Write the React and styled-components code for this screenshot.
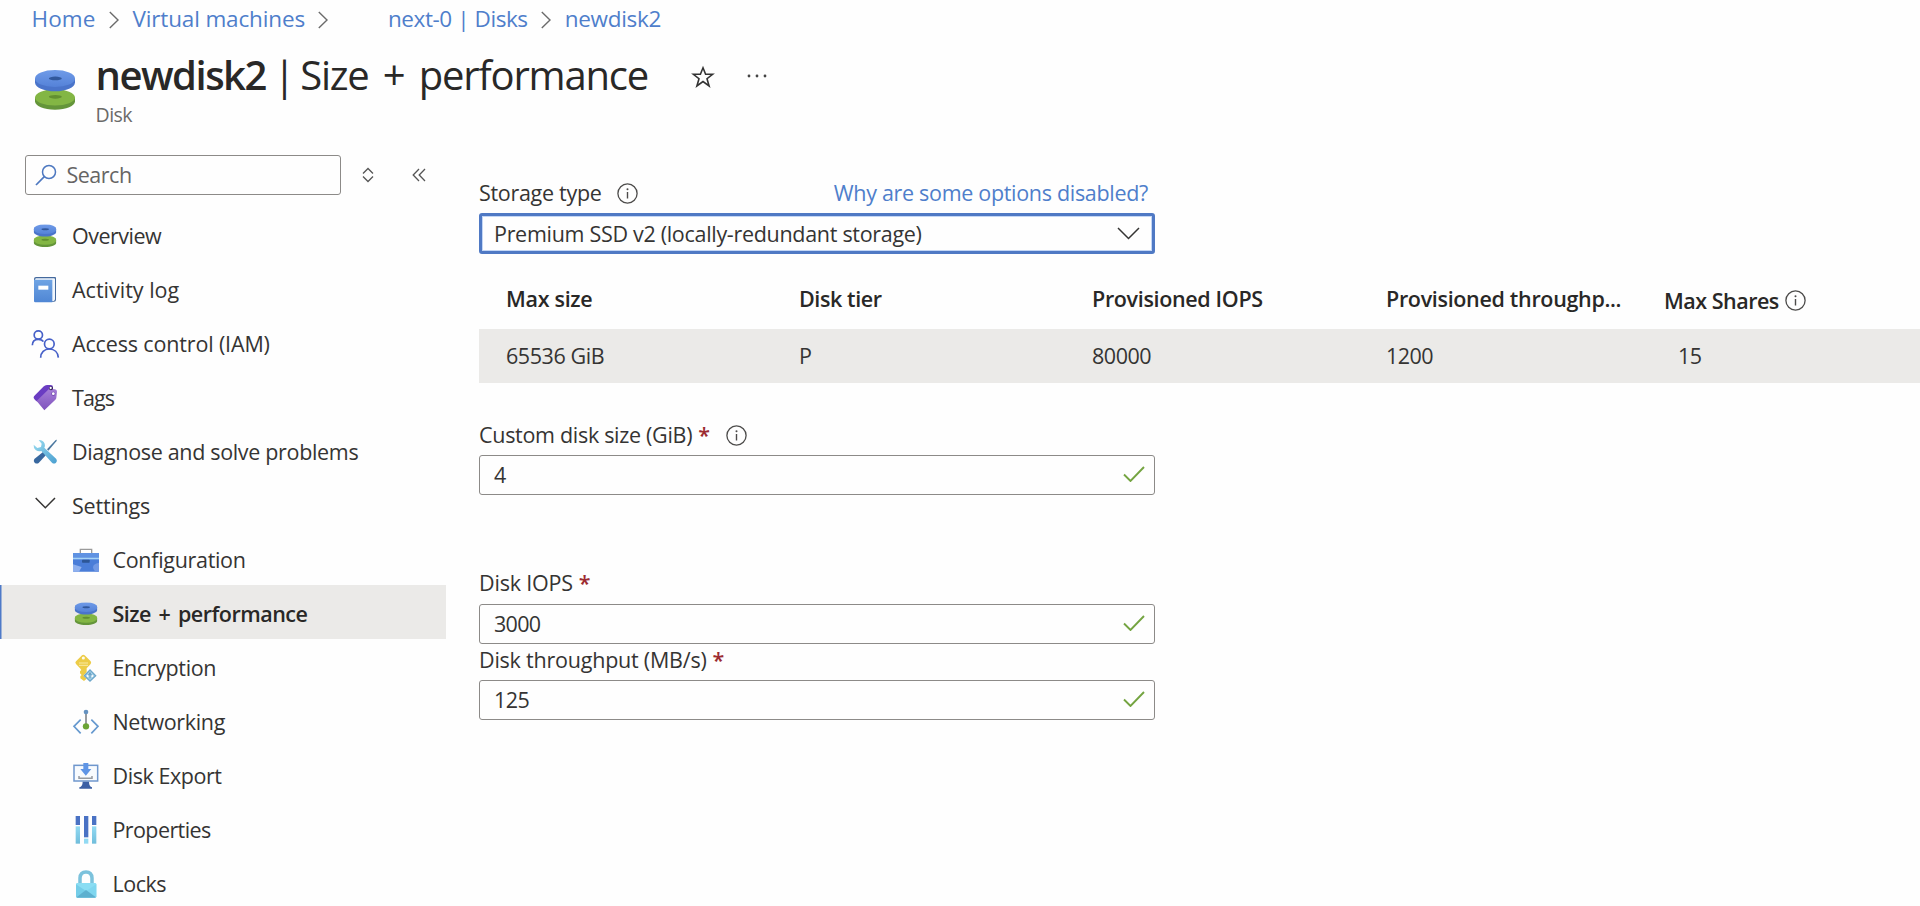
import React from "react";
import styled, { createGlobalStyle, css } from "styled-components";

const GlobalStyle = createGlobalStyle`
  *, *::before, *::after { box-sizing: border-box; }
  html, body { margin: 0; background: #fefefe; overflow: hidden; }
  body {
    font-family: "Open Sans", "Noto Sans", sans-serif;
    font-size: 21.5px;
    color: #353433;
  }
`;

const Page = styled.div`
  height: 906px;
  display: flex;
  flex-direction: column;
  overflow: hidden;
`;

const Text = styled.span`
  white-space: nowrap;
  letter-spacing: ${(p) => p.$track ?? -0.3}px;
  word-spacing: ${(p) => p.$words || 0}px;
  font-weight: ${(p) => (p.$bold ? 600 : 400)};
`;

/* breadcrumb */
const Breadcrumb = styled.nav`
  flex: none;
  display: flex;
  align-items: center;
  height: 37px;
  padding-left: 31.5px;
`;
const Crumb = styled.a`
  font-size: 22.5px;
  line-height: 37px;
  white-space: nowrap;
  color: #4f7ecb;
  letter-spacing: ${(p) => p.$track}px;
  margin-left: ${(p) => p.$before || 0}px;
`;
const CrumbArrow = styled.svg`
  width: 10px;
  height: 18px;
  margin: 2px 14px 0 13px;
`;

/* title */
const Header = styled.header`
  flex: none;
  display: flex;
  height: 118px;
  padding: 12px 0 0 35px;
`;
const HeaderIcon = styled.div`
  width: 40px;
  height: 40px;
  margin: 21px 20.5px 0 0;
`;
const TitleRow = styled.div`
  display: flex;
  align-items: center;
  height: 51px;
`;
const Title = styled.h1`
  display: flex;
  margin: 0;
  font-size: 40px;
  line-height: 50px;
  font-weight: 400;
  white-space: nowrap;
  letter-spacing: -1.2px;
  word-spacing: 5px;
  color: #292827;
`;
const ResourceName = styled.span`
  font-weight: 600;
  letter-spacing: -1.5px;
`;
const Divider = styled.span`
  margin: 0 6px 0 7.5px;
`;
const Kind = styled.div`
  margin-top: 2px;
  font-size: 19.5px;
  line-height: 26px;
  letter-spacing: -0.5px;
  color: #6b6a69;
`;
const StarIcon = styled.svg`
  width: 24px;
  height: 24px;
  margin: 4px 0 0 43px;
`;
const DotsIcon = styled.svg`
  width: 20px;
  height: 6px;
  margin: 2px 0 0 32px;
`;

/* body */
const Body = styled.div`
  flex: 1;
  min-height: 0;
  display: flex;
`;
const Sidebar = styled.aside`
  flex: none;
  width: 446px;
`;
const SearchRow = styled.div`
  display: flex;
  align-items: center;
  height: 40px;
  padding-left: 25px;
`;
const SearchBox = styled.div`
  display: flex;
  align-items: center;
  gap: 10px;
  width: 316px;
  height: 40px;
  padding: 0 0 1px 8.5px;
  border: 1.5px solid #8c8a88;
  border-radius: 3px;
  color: #666564;
`;
const SearchGlyph = styled.svg`
  width: 22px;
  height: 22px;
`;
const SortGlyph = styled.svg`
  width: 12px;
  height: 16px;
  margin-left: 21px;
`;
const CollapseGlyph = styled.svg`
  width: 14px;
  height: 14px;
  margin-left: 38px;
`;
const Menu = styled.ul`
  list-style: none;
  margin: 12px 0 0;
  padding: 0;
`;
const MenuItem = styled.li`
  display: flex;
  align-items: center;
  gap: 14px;
  height: 54px;
  padding: 3px 0 0 ${(p) => (p.$nested ? 72.5 : 32)}px;
  ${(p) =>
    p.$selected &&
    css`
      background: #ebeae8;
      box-shadow: inset 1.5px 0 0 #4f7ac8;
      color: #292827;
    `}
`;
const MenuIcon = styled.svg`
  flex: none;
  width: 26px;
  height: 26px;
  overflow: visible;
`;
const DiskIcon = styled.svg`
  display: block;
  width: 100%;
  height: 100%;
`;

/* content */
const Content = styled.main`
  flex: 1;
  min-width: 0;
  padding: 23px 0 0 33px;
`;
const Field = styled.section`
  width: 676px;
  margin-top: ${(p) => p.$top || 0}px;
`;
const Label = styled.label`
  display: flex;
  align-items: center;
  height: 30px;
  margin-bottom: ${(p) => p.$gap || 5}px;
  padding-right: 7px;
  line-height: 30px;
`;
const Required = styled.span`
  margin-left: 6px;
  font-weight: 600;
  color: #9c2b30;
`;
const InfoGlyph = styled.svg`
  flex: none;
  width: 21px;
  height: 21px;
  margin-left: ${(p) => p.$before}px;
`;
const HelpLink = styled.a`
  margin-left: auto;
  color: #4f7ecb;
  white-space: nowrap;
  letter-spacing: -0.31px;
`;
const Select = styled.div`
  display: flex;
  align-items: center;
  justify-content: space-between;
  height: 41px;
  padding: 0 12px 0 12px;
  border: 3px solid #4f79c4;
  border-radius: 3px;
  box-shadow: inset 0 0 0 1px #c3d6f5;
`;
const SelectArrow = styled.svg`
  width: 23px;
  height: 13px;
`;
const Input = styled.div`
  display: flex;
  align-items: center;
  justify-content: space-between;
  height: 40px;
  padding: 0 9px 1.5px 14px;
  border: 1.5px solid #8c8a88;
  border-radius: 3px;
`;
const CheckGlyph = styled.svg`
  width: 22px;
  height: 16px;
`;
const columns = css`
  display: grid;
  grid-template-columns: 293px 293px 294px 278px 1fr;
  align-items: center;
  padding-left: 27px;
`;
const TableHead = styled.div`
  ${columns}
  height: 75px;
  padding-top: 14px;
  color: #292827;
`;
const TableRow = styled.div`
  ${columns}
  height: 54px;
  padding-bottom: 1.5px;
  background: #ebeae8;
`;
const Cell = styled.div`
  display: flex;
  align-items: center;
  padding: ${(p) => p.$down || 0}px 0 0 ${(p) => p.$indent || 0}px;
`;

const Disks = ({ id }) => (
  <DiskIcon viewBox="0 0 118 118">
    <defs>
      <linearGradient id={id} x1="0" y1="0" x2="0" y2="1">
        <stop offset="0" stopColor="#6f9be8" />
        <stop offset="1" stopColor="#5582d8" />
      </linearGradient>
    </defs>
    <path d="M0 81v11c0 14 26 25 59 25s59-11 59-25V81z" fill="#64953a" />
    <ellipse cx="59" cy="81" rx="59" ry="24" fill="#83b644" />
    <ellipse cx="60" cy="79" rx="19" ry="5.5" fill="#628f30" />
    <path d="M0 25v12c0 14 26 26 59 26s59-12 59-26V25z" fill="#4a74ca" />
    <ellipse cx="59" cy="25" rx="59" ry="25" fill={`url(#${id})`} />
    <ellipse cx="60" cy="25" rx="19" ry="5.5" fill="#31589c" />
  </DiskIcon>
);

const icons = {
  disk: (
    <svg x="4.5" y="4" width="69" height="69">
      <Disks id="diskFace" />
    </svg>
  ),
  log: (
    <>
      <defs>
        <linearGradient id="book" x1="0" y1="0" x2="0" y2="1">
          <stop offset="0" stopColor="#6fa4e4" />
          <stop offset="1" stopColor="#4f86d4" />
        </linearGradient>
      </defs>
      <path d="M6 6Q6 0 12 0H69Q72 0 72 4V68Q72 74 66 74H10z" fill="#44699d" />
      <path d="M11 4H66Q69 4 69 7V67Q69 71 65 72H60V9H9z" fill="#f1f6fc" />
      <path d="M6 8H61V76H10Q6 76 6 72z" fill="url(#book)" />
      <rect x="19" y="26" width="30" height="12" fill="#fff" />
    </>
  ),
  people: (
    <g fill="none" stroke="#4660c8" strokeWidth="5">
      <circle cx="19" cy="12" r="12.5" />
      <path d="M1 43C1 31 9 25 19 25C26 25 31 27 34 32" />
      <circle cx="52" cy="39" r="14.5" />
      <path d="M26 80C26 64 37 54 52 54S78 64 79 80" />
    </g>
  ),
  tag: (
    <>
      <defs>
        <linearGradient id="tagFront" x1="0" y1="0" x2="0" y2="1">
          <stop offset="0" stopColor="#a67fd8" />
          <stop offset="1" stopColor="#7f52bd" />
        </linearGradient>
      </defs>
      <path d="M6 34L34 5Q39 0 45 0H56Q63 0 63 7V25L20 52Q6 44 5 38Q5 36 6 34z" fill="#6a3cc2" />
      <path d="M14 48L50 13Q53 10 57 11L69 13Q75 14 75 20L73 38Q73 41 70 44L37 76z" fill="url(#tagFront)" />
      <circle cx="57" cy="10" r="6" fill="#38275c" />
      <circle cx="56" cy="9" r="3.4" fill="#fff" />
      <circle cx="64" cy="26" r="6" fill="#6a42a8" />
      <circle cx="64" cy="26" r="4.2" fill="#fff" />
    </>
  ),
  tools: (
    <>
      <defs>
        <linearGradient id="wrench" x1="0" y1="0" x2="1" y2="1">
          <stop offset="0" stopColor="#9adcf0" />
          <stop offset="1" stopColor="#4a9fd0" />
        </linearGradient>
      </defs>
      <path d="M75 2L71 3L45 31L49 35L73 7z" fill="#4a779f" />
      <path d="M33 39L42 48L20 72Q14 76 8 71Q3 66 7 60z" fill="#38689f" />
      <path
        d="M20 3Q33 2 38 14Q40 20 37 26L73 60Q77 66 72 71Q66 76 60 71L28 36Q19 39 11 33Q4 27 5 17L16 27L27 24L29 14z"
        fill="url(#wrench)"
      />
    </>
  ),
  chevron: <path d="M11 15L40 44L69 15" fill="none" stroke="#353433" strokeWidth="4.5" />,
  toolbox: (
    <>
      <path d="M22 19V7H56V19" fill="none" stroke="#9a9a9a" strokeWidth="4" />
      <rect x="0" y="18" width="78" height="56" rx="2" fill="#4a7dd8" />
      <rect x="0" y="18" width="78" height="14" fill="#5f92e2" />
      <rect x="0" y="32" width="78" height="5" fill="#a5d3f6" />
      <path d="M0 52L26 60L18 74H2Q0 74 0 72z" fill="#8fb0ee" />
      <path d="M78 47Q60 50 60 61Q61 71 70 74H78z" fill="#7299e4" />
      <rect x="27" y="38" width="23" height="9" rx="2" fill="#2d5697" />
    </>
  ),
  key: (
    <>
      <path
        d="M27 1Q31-3 35 1L53 19Q56 23 53 27L41 40V71L33 78L22 70V64L26 60L21 55V49L25 45L21 40L9 27Q5 23 9 19z"
        fill="#edcc47"
      />
      <circle cx="31" cy="9" r="4.6" fill="#fdfbf0" />
      <path d="M18 24H45M18 31H45" stroke="#f8e9a5" strokeWidth="3" />
      <path d="M51 42L71 62L51 81L31 62z" fill="#fff" />
      <path d="M51 45L68 62L51 78L34 62z" fill="#a9d4ea" stroke="#6ea7ca" strokeWidth="4" />
      <path d="M51 52V70M43 64L51 55L59 64" fill="none" stroke="#5c94bb" strokeWidth="3" />
      <circle cx="44" cy="63" r="3" fill="#fff" />
      <circle cx="58" cy="63" r="3" fill="#fff" />
    </>
  ),
  network: (
    <>
      <path d="M23 32L3 52L23 73M55 32L75 52L55 73" fill="none" stroke="#6699cf" strokeWidth="5" />
      <path d="M39 10V50" stroke="#85898c" strokeWidth="5" />
      <circle cx="39" cy="9" r="7" fill="#6592c0" />
      <circle cx="39" cy="52" r="9.5" fill="#6ca435" />
    </>
  ),
  exportDisk: (
    <>
      <rect x="3" y="7" width="71" height="47" fill="#f8fbfe" stroke="#6f97cd" strokeWidth="4.5" />
      <path d="M31 0H46V18H55L38.500 38L22 18H31z" fill="#5f95e6" />
      <path d="M18 39V46H57V39" fill="none" stroke="#969ba1" strokeWidth="4.5" />
      <path d="M29 56H48Q48 70 57 73V77H19V73Q29 70 29 56z" fill="#3b5fa4" />
    </>
  ),
  bars: (
    <>
      <defs>
        <linearGradient id="barLow" x1="0" y1="0" x2="0" y2="1">
          <stop offset="0" stopColor="#92daf3" />
          <stop offset="1" stopColor="#70bddb" />
        </linearGradient>
      </defs>
      <rect x="8" y="-3" width="13" height="27" fill="#4a72c4" />
      <rect x="33" y="-3" width="13" height="64" fill="#4a72c4" />
      <rect x="57" y="-3" width="13" height="27" fill="#4a72c4" />
      <rect x="8" y="28" width="13" height="52" fill="url(#barLow)" />
      <rect x="33" y="65" width="13" height="15" fill="#92daf3" />
      <rect x="57" y="28" width="13" height="52" fill="url(#barLow)" />
    </>
  ),
  lock: (
    <>
      <path d="M21 39V21Q22 3 39 3T57 21V39" fill="none" stroke="#7cc2dc" strokeWidth="10.500" />
      <rect x="9" y="36" width="61" height="44" rx="4" fill="#8addf3" />
      <path d="M9 40L39 60L9 79z" fill="#74cde8" />
      <path d="M70 40L39 60L70 79z" fill="#7fd6ef" />
      <path d="M10 79L39 57L69 79Q68 80 66 80H13z" fill="#5db0cf" />
    </>
  ),
};

const menu = [
  { icon: "disk", label: "Overview", track: -0.5 },
  { icon: "log", label: "Activity log", track: 0 },
  { icon: "people", label: "Access control (IAM)", track: -0.15 },
  { icon: "tag", label: "Tags", track: -0.9 },
  { icon: "tools", label: "Diagnose and solve problems", track: -0.33 },
  { icon: "chevron", label: "Settings", track: -0.2 },
  { icon: "toolbox", label: "Configuration", track: -0.31, nested: true },
  { icon: "disk", label: "Size + performance", track: -0.5, words: 2.5, nested: true, selected: true },
  { icon: "key", label: "Encryption", track: -0.38, nested: true },
  { icon: "network", label: "Networking", track: -0.34, nested: true },
  { icon: "exportDisk", label: "Disk Export", track: -0.45, nested: true },
  { icon: "bars", label: "Properties", track: -0.6, nested: true },
  { icon: "lock", label: "Locks", track: -0.5, nested: true },
];

const Arrow = () => (
  <CrumbArrow viewBox="0 0 10 18">
    <path d="M0.800 1L9 9L0.800 17" fill="none" stroke="#6b6b6b" strokeWidth="1.4" />
  </CrumbArrow>
);

const Info = ({ before }) => (
  <InfoGlyph $before={before} viewBox="0 0 21 21">
    <circle cx="10.500" cy="10.500" r="9.600" fill="none" stroke="#4c4b4a" strokeWidth="1.3" />
    <path d="M10.500 9V15.500" stroke="#4c4b4a" strokeWidth="1.4" />
    <circle cx="10.500" cy="6.300" r="1" fill="#4c4b4a" />
  </InfoGlyph>
);

const TextField = ({ label, value, track, valueTrack, info, top, gap }) => (
  <Field $top={top}>
    <Label $gap={gap}>
      <Text $track={track}>{label}</Text>
      <Required>*</Required>
      {info && <Info before={16} />}
    </Label>
    <Input>
      <Text $track={valueTrack}>{value}</Text>
      <CheckGlyph viewBox="0 0 22 16">
        <path d="M1 8.500L7.500 15L21 1" fill="none" stroke="#74a441" strokeWidth="1.9" />
      </CheckGlyph>
    </Input>
  </Field>
);

export default function App() {
  return (
    <Page>
      <GlobalStyle />
      <Breadcrumb>
        <Crumb $track={0.1}>Home</Crumb>
        <Arrow />
        <Crumb $track={-0.15}>Virtual machines</Crumb>
        <Arrow />
        <Crumb $track={-0.43} $before={46}>next-0 | Disks</Crumb>
        <Arrow />
        <Crumb $track={-0.27}>newdisk2</Crumb>
      </Breadcrumb>

      <Header>
        <HeaderIcon>
          <Disks id="headerFace" />
        </HeaderIcon>
        <div>
          <TitleRow>
            <Title>
              <ResourceName>newdisk2</ResourceName>
              <Divider>|</Divider>
              <span>Size + performance</span>
            </Title>
            <StarIcon viewBox="0 0 24 24">
              <path
                d="M12 2.800L14.600 9.300H21.600L16 13.700L18.100 21L12 16.600L5.900 21L8 13.700L2.400 9.300H9.400z"
                fill="none"
                stroke="#333"
                strokeWidth="1.6"
              />
            </StarIcon>
            <DotsIcon viewBox="0 0 20 6">
              <circle cx="2" cy="3" r="1.400" fill="#444" />
              <circle cx="10" cy="3" r="1.400" fill="#444" />
              <circle cx="18" cy="3" r="1.400" fill="#444" />
            </DotsIcon>
          </TitleRow>
          <Kind>Disk</Kind>
        </div>
      </Header>

      <Body>
        <Sidebar>
          <SearchRow>
            <SearchBox>
              <SearchGlyph viewBox="0 0 22 22">
                <circle cx="14" cy="8" r="6.500" fill="none" stroke="#4d78c0" strokeWidth="1.5" />
                <path d="M9.300 12.700L1 21" stroke="#4d78c0" strokeWidth="1.7" />
              </SearchGlyph>
              <Text $track={-0.5}>Search</Text>
            </SearchBox>
            <SortGlyph viewBox="0 0 12 16">
              <path d="M1 6.500L6 1.500L11 6.500M1 9.500L6 14.500L11 9.500" fill="none" stroke="#555" strokeWidth="1.3" />
            </SortGlyph>
            <CollapseGlyph viewBox="0 0 14 14">
              <path d="M7 1L1.200 7L7 13M13 1L7.200 7L13 13" fill="none" stroke="#555" strokeWidth="1.3" />
            </CollapseGlyph>
          </SearchRow>
          <Menu>
            {menu.map((m) => (
              <MenuItem key={m.label} $nested={m.nested} $selected={m.selected}>
                <MenuIcon viewBox="0 0 78 78">{icons[m.icon]}</MenuIcon>
                <Text $track={m.track} $words={m.words} $bold={m.selected}>{m.label}</Text>
              </MenuItem>
            ))}
          </Menu>
        </Sidebar>

        <Content>
          <Field>
            <Label>
              <Text $track={-0.3}>Storage type</Text>
              <Info before={15} />
              <HelpLink>Why are some options disabled?</HelpLink>
            </Label>
            <Select>
              <Text $track={-0.3}>Premium SSD v2 (locally-redundant storage)</Text>
              <SelectArrow viewBox="0 0 23 13">
                <path d="M1 1L11.500 11.500L22 1" fill="none" stroke="#353433" strokeWidth="1.500" />
              </SelectArrow>
            </Select>
          </Field>

          <TableHead>
            <Cell><Text $bold $track={-0.3}>Max size</Text></Cell>
            <Cell><Text $bold $track={-0.4}>Disk tier</Text></Cell>
            <Cell><Text $bold $track={-0.34}>Provisioned IOPS</Text></Cell>
            <Cell><Text $bold $track={-0.32}>Provisioned throughp...</Text></Cell>
            <Cell $down={3}>
              <Text $bold $track={-0.5}>Max Shares</Text>
              <Info before={6} />
            </Cell>
          </TableHead>
          <TableRow>
            <Cell><Text $track={-0.42}>65536 GiB</Text></Cell>
            <Cell><Text>P</Text></Cell>
            <Cell><Text $track={-0.48}>80000</Text></Cell>
            <Cell><Text $track={-0.54}>1200</Text></Cell>
            <Cell $indent={14}><Text $track={-0.5}>15</Text></Cell>
          </TableRow>

          <TextField label="Custom disk size (GiB)" value="4" track={-0.3} top={37} info />
          <TextField label="Disk IOPS" value="3000" track={-0.2} valueTrack={-0.7} top={73} gap={6} />
          <TextField label="Disk throughput (MB/s)" value="125" track={-0.22} valueTrack={-0.6} top={1} />
        </Content>
      </Body>
    </Page>
  );
}
